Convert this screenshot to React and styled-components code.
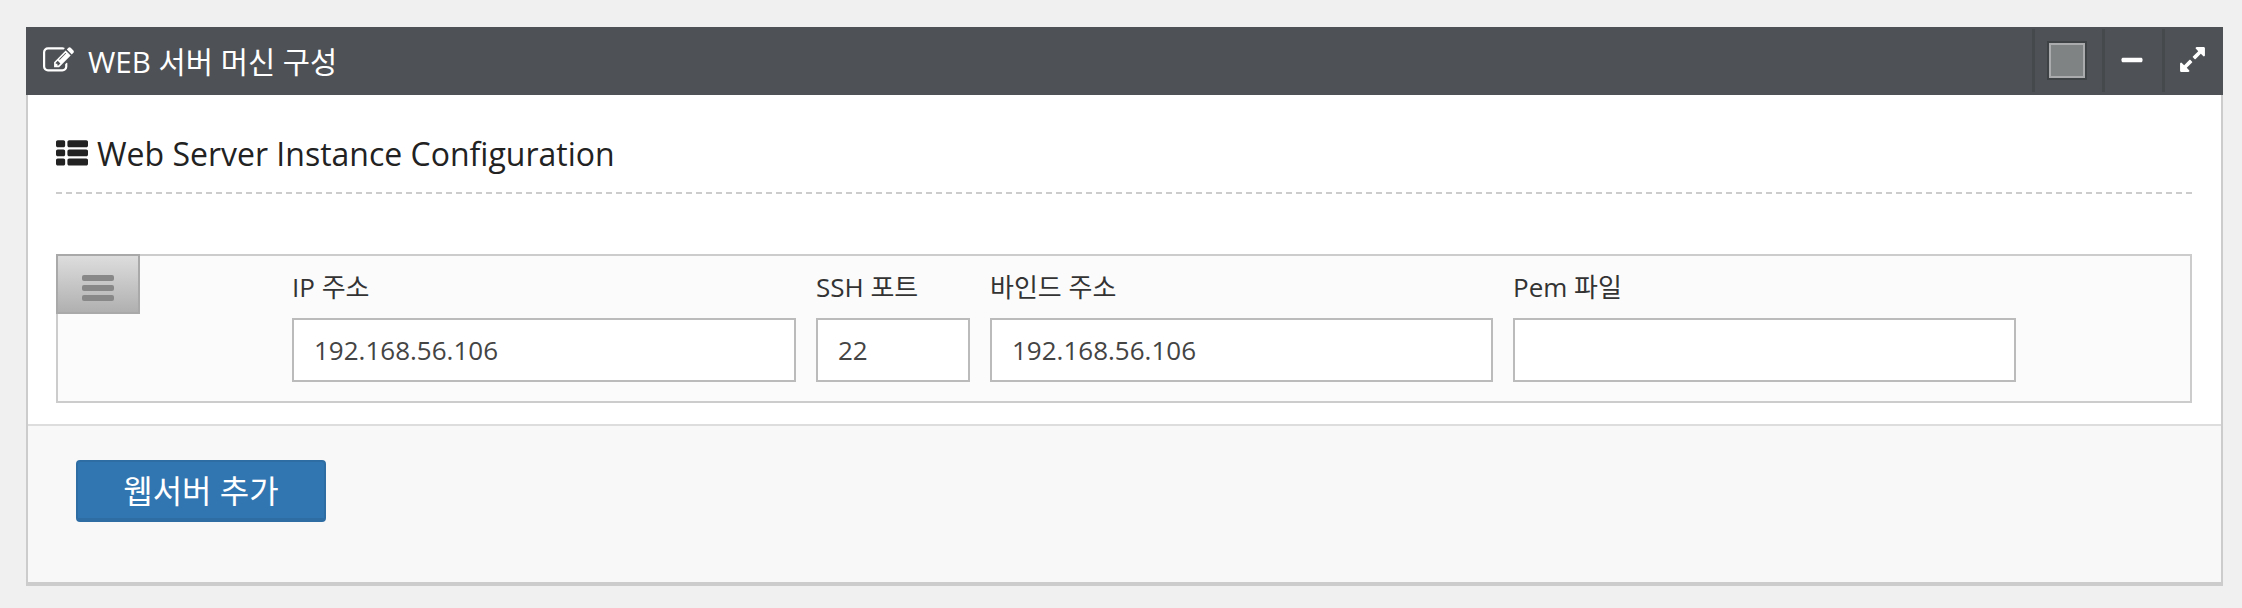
import React from 'react';
import styled, { createGlobalStyle } from 'styled-components';
import { FaMinus } from 'react-icons/fa';

const fontStack = `"Open Sans", "Noto Sans CJK KR", sans-serif`;

const GlobalStyle = createGlobalStyle`
  html, body {
    margin: 0;
    background: #f0f0f0;
    font-family: ${fontStack};
  }
  * {
    box-sizing: border-box;
  }
`;

const Page = styled.div`
  padding: 27px 19px 22px 26px;
`;

const Panel = styled.section`
  display: flex;
  flex-direction: column;
  height: 559px;
  background: #fff;
  border-left: 2px solid #ccc;
  border-right: 2px solid #ccc;
  border-bottom: 4px solid #ccc;
`;

const Header = styled.header`
  display: flex;
  flex: 0 0 68px;
  align-items: stretch;
  margin: 0 -2px;
  padding: 2px 0 3px;
  background: #4e5155;
  color: #fff;
`;

const HeaderTitle = styled.h1`
  display: flex;
  flex: 1;
  align-items: center;
  gap: 14px;
  margin: 0;
  padding-left: 17px;
  font-size: 29.6px;
  font-weight: 400;
`;

const Tool = styled.div`
  display: flex;
  align-items: center;
  justify-content: center;
  width: ${(p) => p.$width}px;
  padding-right: 3px;
  border-left: 3px solid #46494c;
  font-size: 24px;
  svg {
    margin-top: -2px;
  }
`;

const ColorSwatch = styled.div`
  width: 40px;
  height: 39px;
  border: 2px solid #3f4245;
  background: #808384;
  box-shadow: inset 0 0 0 2px #a9abac;
`;

const Body = styled.div`
  flex: 1;
  padding: 36px 29px 21px 28px;
`;

const SectionTitle = styled.h2`
  display: flex;
  align-items: center;
  gap: 9px;
  height: 63px;
  margin: 0 0 60px;
  padding-bottom: 16px;
  border-bottom: 2px dashed #ccc;
  color: #222;
  font-size: 32px;
  font-weight: 400;
`;

const InstanceRow = styled.div`
  position: relative;
  display: grid;
  grid-template-columns: 504px 154px 503px 503px;
  gap: 0 20px;
  height: 149px;
  padding: 16px 0 0 234px;
  border: 2px solid #ccc;
  background: #fbfbfb;
`;

const DragHandle = styled.div`
  position: absolute;
  top: -2px;
  left: -2px;
  display: flex;
  flex-direction: column;
  align-items: center;
  justify-content: center;
  gap: 4px;
  width: 84px;
  height: 60px;
  padding-top: 8px;
  border: 2px solid #a9a9a9;
  background: linear-gradient(#ddd, #b0b0b0);
`;

const HandleBar = styled.span`
  width: 32px;
  height: 6px;
  border-radius: 2px;
  background: #888;
`;

const Field = styled.label`
  display: flex;
  flex-direction: column;
  color: #333;
  font-size: 26px;
`;

const FieldLabel = styled.span`
  height: 46px;
  line-height: 30px;
`;

const TextInput = styled.input`
  width: 100%;
  height: 64px;
  padding: 0 20px;
  border: 2px solid #bbb;
  border-radius: 0;
  outline: none;
  background: #fff;
  color: #444;
  font-family: ${fontStack};
  font-size: 26px;
`;

const Footer = styled.footer`
  flex: 0 0 158px;
  padding: 34px 48px;
  border-top: 2px solid #ddd;
  background: #f8f8f8;
`;

const PrimaryButton = styled.button`
  width: 250px;
  height: 62px;
  padding: 0 0 2px;
  border: 2px solid #2e6da4;
  border-bottom-width: 4px;
  border-radius: 4px;
  background: #3276b1;
  color: #fff;
  font-family: ${fontStack};
  font-size: 32px;
`;

const EditIcon = () => (
  <svg width="31" height="31" viewBox="0 0 1792 1792" fill="currentColor">
    <path d="M888 1184l116-116-152-152-116 116v56h96v96h56zm440-720q-16-16-33 1l-350 350q-17 17-1 33t33-1l350-350q17-17 1-33zm80 594v190q0 119-84.5 203.5t-203.5 84.5h-832q-119 0-203.5-84.5t-84.5-203.5v-832q0-119 84.5-203.5t203.5-84.5h832q63 0 117 25 15 7 18 23 3 17-9 29l-49 49q-14 14-32 8-23-6-45-6h-832q-66 0-113 47t-47 113v832q0 66 47 113t113 47h832q66 0 113-47t47-113v-126q0-13 9-22l64-64q15-15 35-7t20 29zm-96-738l288 288-672 672h-288v-288zm444 132l-92 92-288-288 92-92q28-28 68-28t68 28l152 152q28 28 28 68t-28 68z" />
  </svg>
);

const ListIcon = () => (
  <svg width="32" height="32" viewBox="0 0 1792 1792" fill="currentColor">
    <path d="M512 1248v192q0 40-28 68t-68 28h-320q-40 0-68-28t-28-68v-192q0-40 28-68t68-28h320q40 0 68 28t28 68zm0-512v192q0 40-28 68t-68 28h-320q-40 0-68-28t-28-68v-192q0-40 28-68t68-28h320q40 0 68 28t28 68zm1280 512v192q0 40-28 68t-68 28h-960q-40 0-68-28t-28-68v-192q0-40 28-68t68-28h960q40 0 68 28t28 68zm-1280-1024v192q0 40-28 68t-68 28h-320q-40 0-68-28t-28-68v-192q0-40 28-68t68-28h320q40 0 68 28t28 68zm1280 512v192q0 40-28 68t-68 28h-960q-40 0-68-28t-28-68v-192q0-40 28-68t68-28h960q40 0 68 28t28 68zm0-512v192q0 40-28 68t-68 28h-960q-40 0-68-28t-28-68v-192q0-40 28-68t68-28h960q40 0 68 28t28 68z" />
  </svg>
);

const ExpandIcon = () => (
  <svg width="29" height="29" viewBox="0 0 1792 1792" fill="currentColor">
    <path d="M883 1056q0 13-10 23l-332 332 144 144q19 19 19 45t-19 45-45 19h-448q-26 0-45-19t-19-45v-448q0-26 19-45t45-19 45 19l144 144 332-332q10-10 23-10t23 10l114 114q10 10 10 23zm781-864v448q0 26-19 45t-45 19-45-19l-144-144-332 332q-10 10-23 10t-23-10l-114-114q-10-10-10-23t10-23l332-332-144-144q-19-19-19-45t19-45 45-19h448q26 0 45 19t19 45z" />
  </svg>
);

const fields = [
  { label: 'IP 주소', value: '192.168.56.106' },
  { label: 'SSH 포트', value: '22' },
  { label: '바인드 주소', value: '192.168.56.106' },
  { label: 'Pem 파일', value: '' },
];

export default function App() {
  return (
    <Page>
      <GlobalStyle />
      <Panel>
        <Header>
          <HeaderTitle>
            <EditIcon />
            WEB 서버 머신 구성
          </HeaderTitle>
          <Tool $width={70}>
            <ColorSwatch />
          </Tool>
          <Tool $width={60}>
            <FaMinus />
          </Tool>
          <Tool $width={61}>
            <ExpandIcon />
          </Tool>
        </Header>
        <Body>
          <SectionTitle>
            <ListIcon />
            Web Server Instance Configuration
          </SectionTitle>
          <InstanceRow>
            <DragHandle>
              <HandleBar />
              <HandleBar />
              <HandleBar />
            </DragHandle>
            {fields.map((f) => (
              <Field key={f.label}>
                <FieldLabel>{f.label}</FieldLabel>
                <TextInput defaultValue={f.value} />
              </Field>
            ))}
          </InstanceRow>
        </Body>
        <Footer>
          <PrimaryButton>웹서버 추가</PrimaryButton>
        </Footer>
      </Panel>
    </Page>
  );
}
